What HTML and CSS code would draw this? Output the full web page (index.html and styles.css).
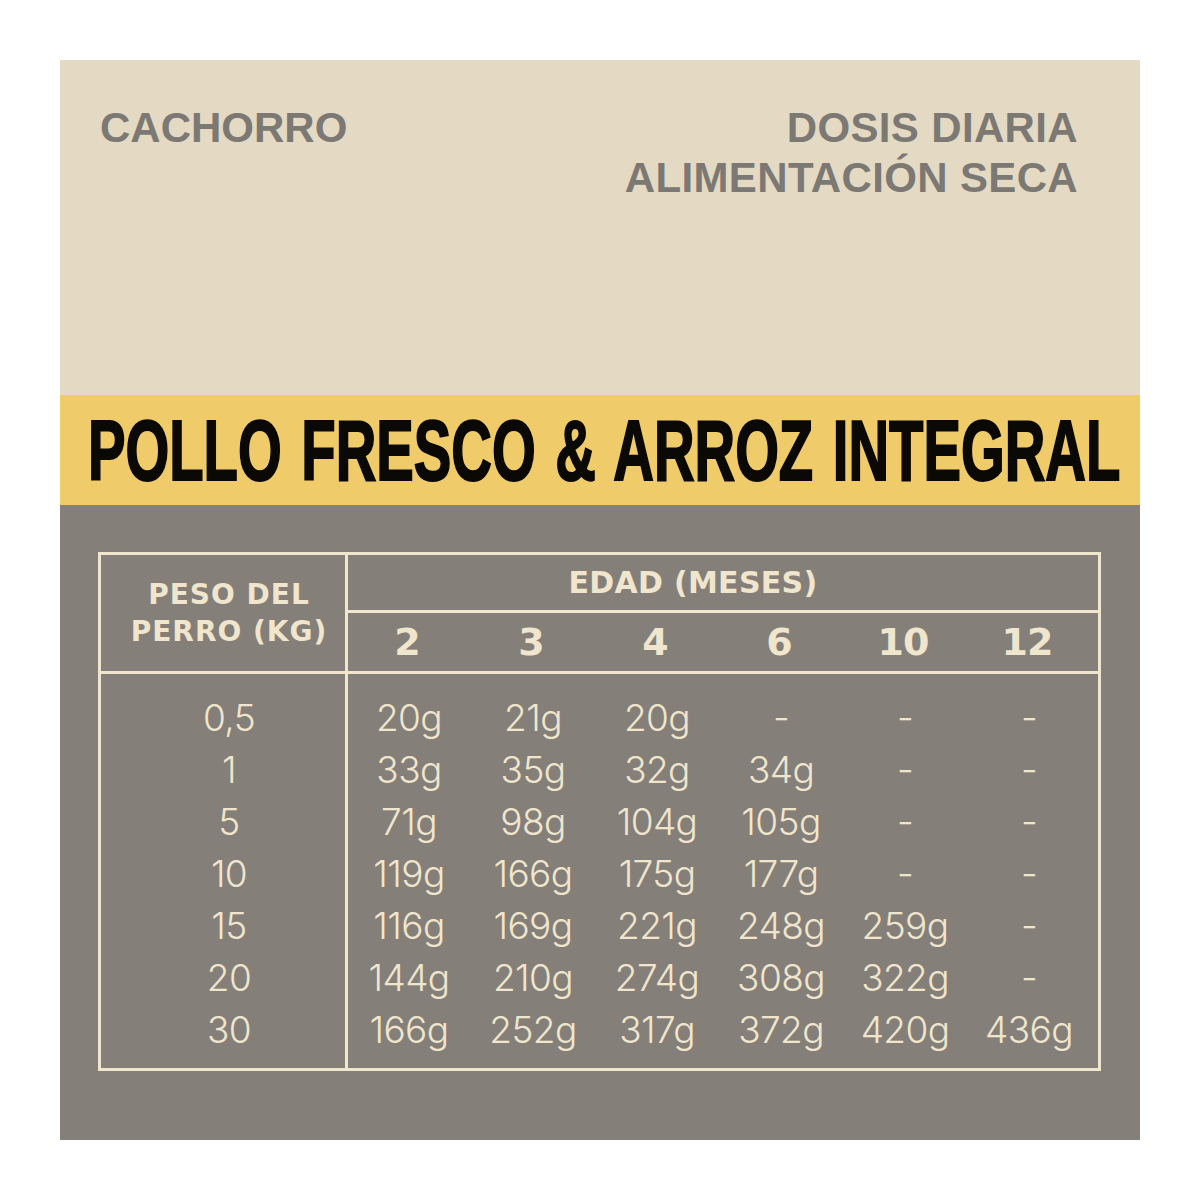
FILE: index.html
```html
<!DOCTYPE html>
<html lang="es">
<head>
<meta charset="utf-8">
<title>Cachorro - Dosis diaria</title>
<link rel="stylesheet" href="styles.css">
</head>
<body>
<div class="panel">
  <header class="top">
    <div class="label">CACHORRO</div>
    <div class="label right">DOSIS DIARIA<br>ALIMENTACIÓN SECA</div>
  </header>
  <div class="band">
    <h1 class="title">POLLO FRESCO &amp; ARROZ INTEGRAL</h1>
  </div>
  <section class="bottom">
    <div class="table">
      <div class="col-left">
        <div class="head-left">PESO DEL<br>PERRO (KG)</div>
        <div class="body-left">
          <div>0,5</div><div>1</div><div>5</div><div>10</div><div>15</div><div>20</div><div>30</div>
        </div>
      </div>
      <div class="col-right">
        <div class="head-right">
          <div class="edad">EDAD (MESES)</div>
          <div class="months">
            <div>2</div><div>3</div><div>4</div><div>6</div><div>10</div><div>12</div>
          </div>
        </div>
        <div class="grid">
          <div>20g</div><div>21g</div><div>20g</div><div>-</div><div>-</div><div>-</div>
          <div>33g</div><div>35g</div><div>32g</div><div>34g</div><div>-</div><div>-</div>
          <div>71g</div><div>98g</div><div>104g</div><div>105g</div><div>-</div><div>-</div>
          <div>119g</div><div>166g</div><div>175g</div><div>177g</div><div>-</div><div>-</div>
          <div>116g</div><div>169g</div><div>221g</div><div>248g</div><div>259g</div><div>-</div>
          <div>144g</div><div>210g</div><div>274g</div><div>308g</div><div>322g</div><div>-</div>
          <div>166g</div><div>252g</div><div>317g</div><div>372g</div><div>420g</div><div>436g</div>
        </div>
      </div>
    </div>
  </section>
</div>
</body>
</html>
```

FILE: styles.css
```css
html, body {
  margin: 0;
  padding: 0;
  background: #ffffff;
}

.panel {
  margin: 60px;
  width: 1080px;
  height: 1080px;
  display: flex;
  flex-direction: column;
}

.top {
  height: 335px;
  box-sizing: border-box;
  background: #e4dac3;
  padding: 43px 62px 0 40px;
  display: flex;
  justify-content: space-between;
  align-items: flex-start;
}

.label {
  font-family: "Liberation Sans", Arial, sans-serif;
  font-weight: 700;
  font-size: 42px;
  line-height: 50px;
  color: #7c7873;
}

.label.right {
  text-align: right;
  letter-spacing: 0.35px;
}

.band {
  height: 110px;
  background: #efcb6a;
  display: flex;
  align-items: center;
  overflow: hidden;
  padding-left: 28px;
}

.title {
  margin: 0;
  display: inline-block;
  white-space: nowrap;
  font-family: "Liberation Sans", Arial, sans-serif;
  font-weight: 700;
  font-size: 86px;
  line-height: 1;
  word-spacing: 6px;
  color: #0b0906;
  -webkit-text-stroke: 2px #0b0906;
  transform: scaleX(0.654);
  transform-origin: left center;
}

.bottom {
  flex: 1;
  background: #857f79;
  padding: 47px 0 0 38px;
}

.table {
  width: 1003px;
  box-sizing: border-box;
  border: 3px solid #efe6cd;
  display: flex;
  color: #efe6cd;
}

.col-left {
  width: 247px;
  box-sizing: border-box;
  border-right: 3px solid #efe6cd;
}

.col-right {
  flex: 1;
}

.head-left {
  height: 116px;
  border-bottom: 3px solid #efe6cd;
  display: flex;
  align-items: center;
  justify-content: center;
  text-align: center;
  padding-left: 12px;
  font-family: "DejaVu Sans", "Liberation Sans", sans-serif;
  font-weight: 700;
  font-size: 28px;
  line-height: 37px;
  letter-spacing: 1px;
}

.head-right {
  height: 116px;
  border-bottom: 3px solid #efe6cd;
  display: flex;
  flex-direction: column;
}

.edad {
  height: 55px;
  border-bottom: 3px solid #efe6cd;
  display: flex;
  align-items: center;
  justify-content: center;
  padding-right: 60px;
  font-family: "DejaVu Sans", "Liberation Sans", sans-serif;
  font-weight: 700;
  font-size: 30px;
  letter-spacing: 0.3px;
}

.months {
  flex: 1;
  display: grid;
  grid-template-columns: repeat(6, 124px);
  align-items: center;
  font-family: "DejaVu Sans", "Liberation Sans", sans-serif;
  font-weight: 700;
  font-size: 38px;
  letter-spacing: -1px;
  text-align: center;
}

.months div {
  margin-left: -6px;
}

.grid div {
  margin-left: -2px;
}

.body-left,
.grid {
  padding: 18px 0 12px;
  font-family: Inter, "Liberation Sans", sans-serif;
  font-weight: 300;
  font-size: 37px;
  line-height: 52px;
  letter-spacing: -0.6px;
  text-align: center;
}

.body-left {
  padding-left: 12px;
}

.grid {
  display: grid;
  grid-template-columns: repeat(6, 124px);
}
```
